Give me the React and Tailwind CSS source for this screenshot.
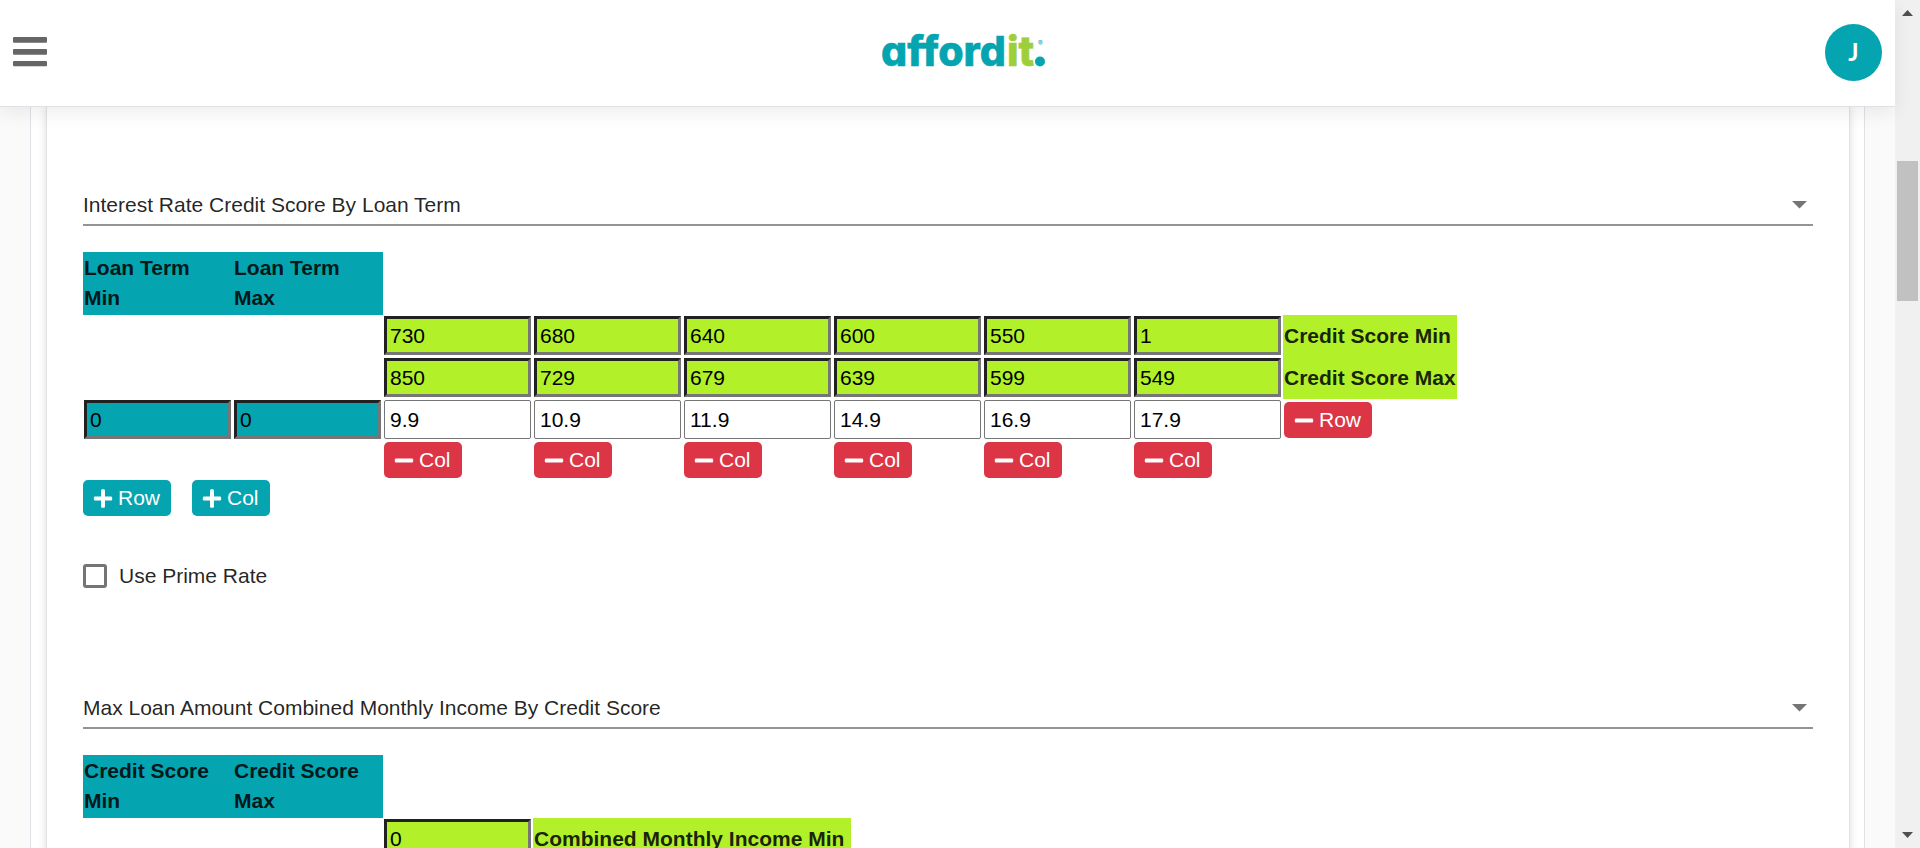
import React from "react";
import { FaPlus, FaMinus } from "react-icons/fa";

const inset =
  "block w-full h-[39px] border-[3px] border-t-[#212121] border-l-[#212121] border-r-[#767676] border-b-[#767676] px-[3px] text-black outline-none";

const tones = {
  lime: inset + " bg-[#b2f029]",
  teal: inset + " bg-[#04a4b0]",
  plain:
    "block w-full h-[39px] rounded-[2px] border border-[#767676] bg-white px-[5px] text-black outline-none",
};

function Cell({ tone, label, value }) {
  return (
    <td className="pt-px pl-px pr-0.5 pb-0.5">
      <input type="text" aria-label={label} defaultValue={value} className={tones[tone]} />
    </td>
  );
}

function HeadCell({ children }) {
  return (
    <th scope="col" className="bg-[#04a4b0] px-px pt-px pb-0.5 text-left align-top font-bold leading-[30px]">
      {children}
    </th>
  );
}

function SideCell({ children }) {
  return (
    <th scope="row" className="bg-[#b2f029] px-px text-left font-bold whitespace-nowrap">
      {children}
    </th>
  );
}

function ActionButton({ kind, children }) {
  const remove = kind === "remove";
  const Icon = remove ? FaMinus : FaPlus;
  return (
    <button
      type="button"
      className={
        "flex h-9 items-center gap-[5px] rounded-[5px] pl-2.5 pr-[11px] text-white " +
        (remove ? "bg-[#dc3545]" : "bg-[#04a4b0]")
      }
    >
      <Icon size={21} className="w-5" aria-hidden="true" />
      {children}
    </button>
  );
}

function RuleSelect({ id, value }) {
  return (
    <div className="flex h-[38px] items-center border-b-2 border-[#949494]">
      <select
        id={id}
        aria-label="Rule type"
        defaultValue={value}
        className="h-full min-w-0 flex-1 appearance-none bg-transparent pb-0.5 outline-none"
      >
        <option>{value}</option>
      </select>
      <svg viewBox="0 0 15 8" className="mr-1.5 mb-0.5 h-2 w-[15px] fill-[#757575]" aria-hidden="true">
        <path d="M0 0h15L7.500 7.500z" />
      </svg>
    </div>
  );
}

function Columns({ count }) {
  return (
    <colgroup>
      {Array.from({ length: count }, (_, i) => (
        <col key={i} className="w-[150px]" />
      ))}
      <col />
    </colgroup>
  );
}

const scoreMin = ["730", "680", "640", "600", "550", "1"];
const scoreMax = ["850", "729", "679", "639", "599", "549"];
const rates = ["9.9", "10.9", "11.9", "14.9", "16.9", "17.9"];

function InterestRateTable() {
  return (
    <table className="w-[1374px] table-fixed">
      <Columns count={8} />
      <tbody>
        <tr>
          <HeadCell>Loan Term<br />Min</HeadCell>
          <HeadCell>Loan Term<br />Max</HeadCell>
        </tr>
        <tr>
          <td colSpan={2} />
          {scoreMin.map((v) => <Cell key={v} tone="lime" label="Credit score min" value={v} />)}
          <SideCell>Credit Score Min</SideCell>
        </tr>
        <tr>
          <td colSpan={2} />
          {scoreMax.map((v) => <Cell key={v} tone="lime" label="Credit score max" value={v} />)}
          <SideCell>Credit Score Max</SideCell>
        </tr>
        <tr>
          <Cell tone="teal" label="Loan term min" value="0" />
          <Cell tone="teal" label="Loan term max" value="0" />
          {rates.map((v) => <Cell key={v} tone="plain" label="Interest rate" value={v} />)}
          <td className="pl-px"><ActionButton kind="remove">Row</ActionButton></td>
        </tr>
        <tr>
          <td colSpan={2} />
          {rates.map((v) => (
            <td key={v} className="pt-px pl-px pb-0.5"><ActionButton kind="remove">Col</ActionButton></td>
          ))}
        </tr>
      </tbody>
    </table>
  );
}

function MaxLoanTable() {
  return (
    <table className="w-[768px] table-fixed">
      <Columns count={3} />
      <tbody>
        <tr>
          <HeadCell>Credit Score<br />Min</HeadCell>
          <HeadCell>Credit Score<br />Max</HeadCell>
        </tr>
        <tr>
          <td colSpan={2} />
          <Cell tone="lime" label="Combined monthly income min" value="0" />
          <SideCell>Combined Monthly Income Min</SideCell>
        </tr>
      </tbody>
    </table>
  );
}

function Logo() {
  return (
    <svg
      viewBox="0 0 166 60"
      role="img"
      aria-label="affordit."
      className="h-[60px] w-[166px] overflow-visible font-[Inter,sans-serif] font-extrabold [font-feature-settings:'cv11']"
    >
      <text x="0" y="44" fontSize="41" strokeWidth="0.6" className="fill-[#04a4b0] stroke-[#04a4b0]">afford</text>
      <text x="126" y="44" fontSize="41" strokeWidth="0.6" className="fill-[#9fce3b] stroke-[#9fce3b]">it</text>
      <text x="157" y="24" fontSize="7" className="fill-[#04a4b0] font-normal">®</text>
      <circle cx="159" cy="39.500" r="5" className="fill-[#04a4b0]" />
    </svg>
  );
}

function Header() {
  return (
    <header className="relative z-10 grid h-[107px] shrink-0 grid-cols-3 items-center border-b border-[#dee2e6] bg-white px-[13px] pb-0.5 shadow-[0_6px_18px_rgba(0,0,0,0.07)]">
      <button type="button" aria-label="Open menu" className="justify-self-start">
        <svg viewBox="0 0 34 30" className="h-[30px] w-[34px] fill-[#666]">
          <rect y="0" width="34" height="5.700" rx="1" />
          <rect y="12" width="34" height="5.700" rx="1" />
          <rect y="24" width="34" height="5.300" rx="1" />
        </svg>
      </button>
      <div className="justify-self-center pl-8">
        <Logo />
      </div>
      <button
        type="button"
        className="flex size-[57px] items-center justify-center justify-self-end rounded-full bg-[#04a4b0] font-[Lato,sans-serif] text-2xl font-bold text-white"
      >
        J
      </button>
    </header>
  );
}

function ScrollTrack() {
  return (
    <div className="flex w-[25px] shrink-0 flex-col items-center bg-[#f0f0f0] py-2.5" aria-hidden="true">
      <svg viewBox="0 0 11 6" className="h-1.5 w-[11px] fill-[#505050]"><path d="M0 6h11L5.500 0z" /></svg>
      <div className="mt-[145px] h-[140px] w-[21px] bg-[#c1c1c1]" />
      <svg viewBox="0 0 11 6" className="mt-auto h-1.5 w-[11px] fill-[#505050]"><path d="M0 0h11L5.500 6z" /></svg>
    </div>
  );
}

export default function App() {
  return (
    <div className="flex h-screen overflow-hidden bg-[#fafafa] font-['Liberation_Sans',Arial,sans-serif] text-[21px] leading-[30px] text-black/87">
      <div className="flex min-w-0 flex-1 flex-col">
        <Header />
        <main className="min-h-0 flex-1 overflow-hidden px-[30px]">
          <div className="border-x border-[#dee2e6] bg-white pr-[14px] pl-[15px]">
            <div className="border-x border-[#e2e2e2] bg-white px-9 shadow-[0_0_9px_rgba(0,0,0,0.13)]">
              <section className="pt-[81px]">
                <RuleSelect id="rate-rule" value="Interest Rate Credit Score By Loan Term" />
                <div className="pt-[26px]">
                  <InterestRateTable />
                </div>
                <div className="flex gap-[21px]">
                  <ActionButton kind="add">Row</ActionButton>
                  <ActionButton kind="add">Col</ActionButton>
                </div>
                <label className="mt-[45px] flex items-center gap-3">
                  <input type="checkbox" className="size-6 appearance-none rounded-[3px] border-[3px] border-[#757575] bg-white checked:bg-[#04a4b0]" />
                  Use Prime Rate
                </label>
              </section>
              <section className="pt-[100px]">
                <RuleSelect id="income-rule" value="Max Loan Amount Combined Monthly Income By Credit Score" />
                <div className="pt-[26px]">
                  <MaxLoanTable />
                </div>
              </section>
            </div>
          </div>
        </main>
      </div>
      <ScrollTrack />
    </div>
  );
}
